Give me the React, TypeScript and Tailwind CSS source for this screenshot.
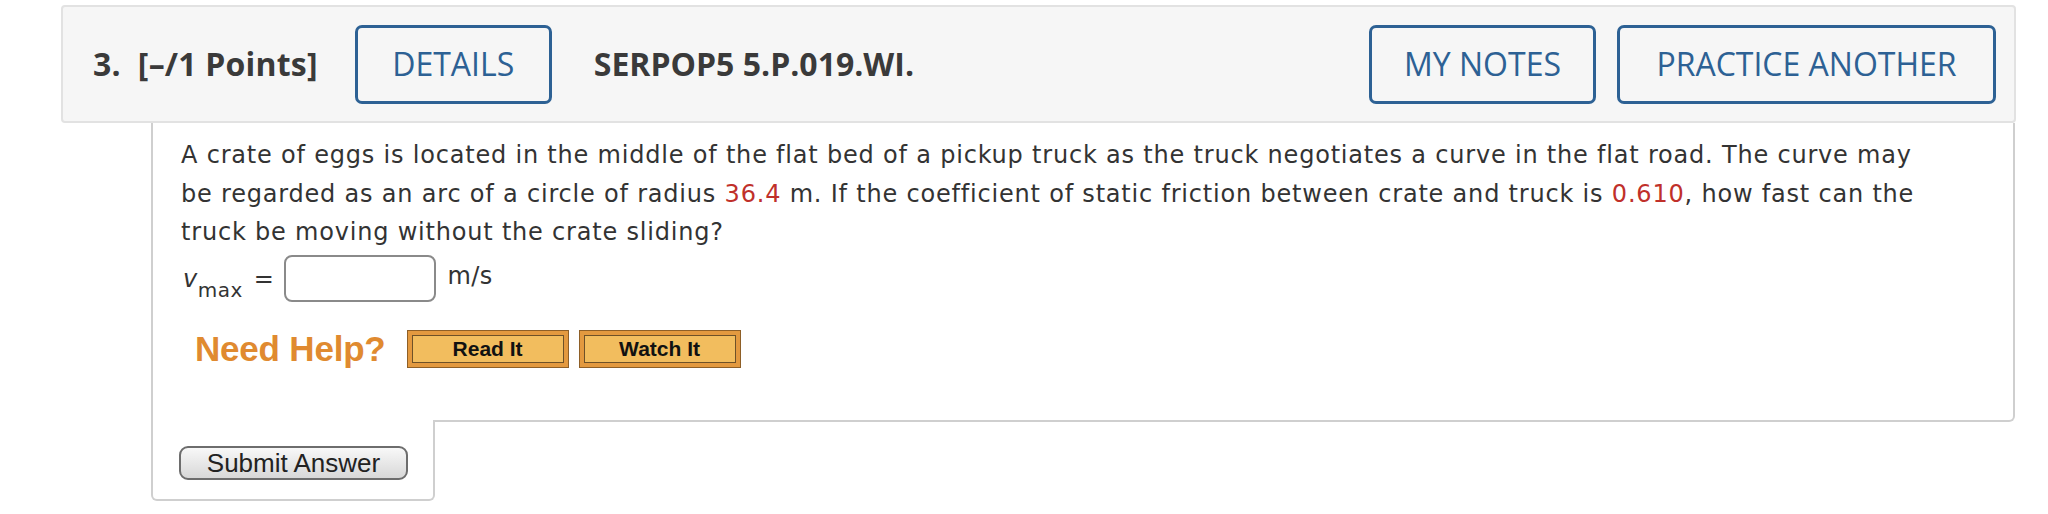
import React from 'react';

function HeaderButton({ label, width }: { label: string; width: string }) {
  return (
    <div
      className={`${width} h-[79px] flex items-center justify-center rounded-[7px] border-[3px] border-[#2d6194] text-[#2d6194] text-[32px] font-medium bg-[#f6f6f6]`}
    >
      {label}
    </div>
  );
}

function HelpButton({ label }: { label: string }) {
  return (
    <div className="w-[162px] h-[38px] border border-[#8e5f27] bg-[#e3993f] p-[4px]">
      <div className="w-full h-full border border-[#6e5128] bg-[#f2bd5e] flex items-center justify-center text-[21px] font-bold text-[#111]">
        {label}
      </div>
    </div>
  );
}

export default function App() {
  return (
    <div className="w-[2048px] h-[514px] bg-white overflow-hidden">
      <div className="pt-[5px] pl-[61px] w-[2016px]">
        {/* Question header */}
        <div className="h-[118px] flex items-center rounded-[4px] border-2 border-[#e2e2e2] bg-[#f6f6f6] pl-[30px] pr-[18px] font-['Open_Sans',sans-serif] text-[#3a3a3a]">
          <span className="text-[32px] font-bold whitespace-pre tracking-[0.2px]">3.  [–/1 Points]</span>
          <div className="ml-[37px]">
            <HeaderButton label="DETAILS" width="w-[197px]" />
          </div>
          <span className="ml-[42px] text-[32px] font-bold">SERPOP5 5.P.019.WI.</span>
          <div className="ml-auto flex gap-[21px]">
            <HeaderButton label="MY NOTES" width="w-[227px]" />
            <HeaderButton label="PRACTICE ANOTHER" width="w-[379px]" />
          </div>
        </div>

        {/* Question body */}
        <div className="ml-[90px] w-[1864px]">
          <div className="h-[299px] border-x-2 border-b-2 border-[#cfcfcf] rounded-br-[6px] pl-[28px] pt-[13px] font-['DejaVu_Sans',sans-serif] text-[#333]">
            <p className="text-[24px] leading-[38.5px] tracking-[0.8px] whitespace-nowrap">
              A crate of eggs is located in the middle of the flat bed of a pickup truck as the truck negotiates a curve in the flat road. The curve may
              <br />
              be regarded as an arc of a circle of radius <span className="text-[#c0302a]">36.4</span> m. If the coefficient of static friction between crate and truck is{' '}
              <span className="text-[#c0302a]">0.610</span>, how fast can the
              <br />
              truck be moving without the crate sliding?
            </p>
            <div className="mt-[3px] flex items-center h-[48px] text-[24px] tracking-[0.5px]">
              <span className="italic ml-[2px]">v</span>
              <span className="text-[20px] mt-[22px]">max</span>
              <span className="ml-[11px]">=</span>
              <div className="ml-[10px] w-[152px] h-[47px] rounded-[8px] border-2 border-[#8a8a8a] bg-white" />
              <span className="ml-[11px] -mt-[6px]">m/s</span>
            </div>
            <div className="mt-[20px] flex items-center font-['Liberation_Sans',Arial,sans-serif]">
              <span className="ml-[14px] text-[35px] font-bold text-[#e08a30] tracking-[-0.2px]">Need Help?</span>
              <div className="ml-[21px] flex gap-[10px]">
                <HelpButton label="Read It" />
                <HelpButton label="Watch It" />
              </div>
            </div>
          </div>

          {/* Submit tab */}
          <div className="relative -mt-[2px] w-[284px] h-[81px] bg-white border-x-2 border-b-2 border-[#cfcfcf] rounded-b-[6px] pl-[26px] pt-[26px]">
            <button className="w-[229px] h-[34px] rounded-[9px] border-2 border-[#6d6d6d] bg-gradient-to-b from-[#f8f8f8] to-[#d8d8d8] font-['Liberation_Sans',Arial,sans-serif] text-[26px] leading-none text-[#222]">
              Submit Answer
            </button>
          </div>
        </div>
      </div>
    </div>
  );
}
